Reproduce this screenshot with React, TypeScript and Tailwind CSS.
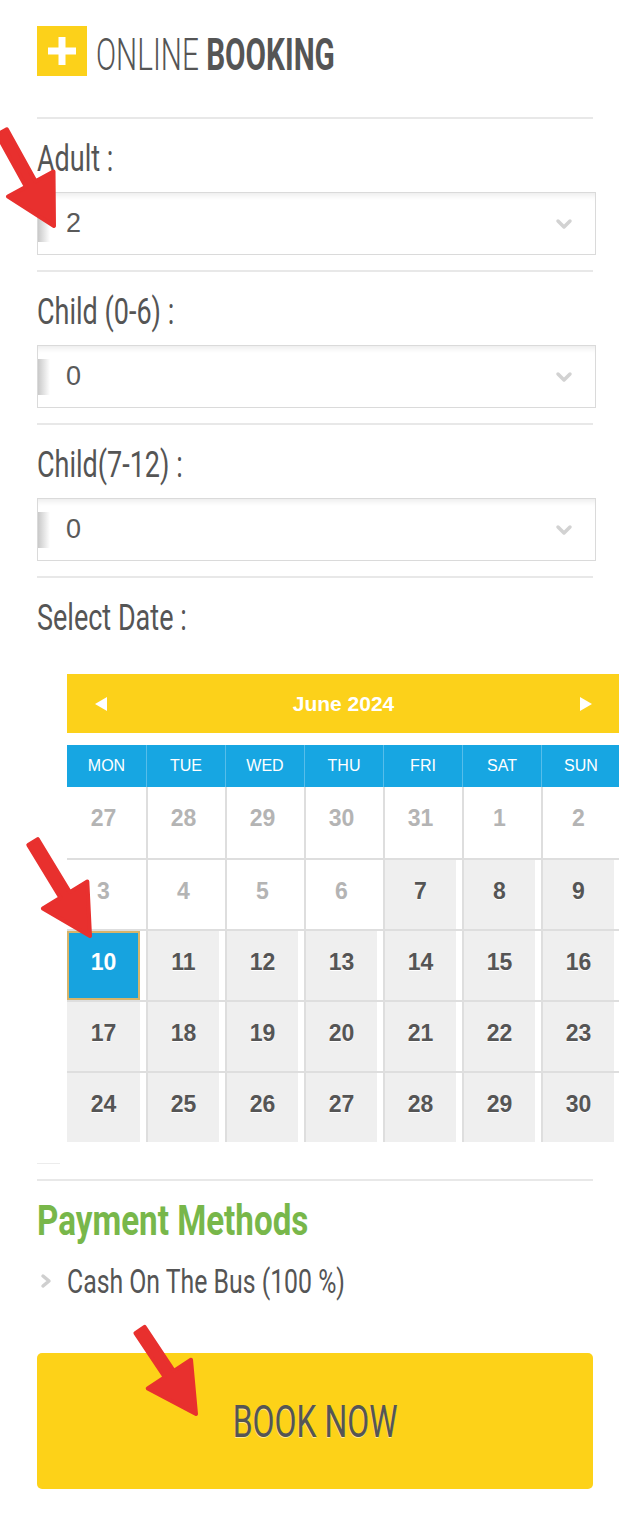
import { Fragment } from "react";

type Pt = [number, number];

// red annotation arrows drawn on top of the form
const arrowPoints = (s: Pt, t: Pt, shaft = 11, headLen = 48, headW = 26) => {
    const dx = t[0] - s[0]
    const dy = t[1] - s[1]
    const len = Math.hypot(dx, dy)
    const ux = dx / len
    const uy = dy / len
    const nx = -uy
    const ny = ux
    const bx = t[0] - ux * headLen
    const by = t[1] - uy * headLen
    const pts: Pt[] = [
        [s[0] + nx * shaft / 2, s[1] + ny * shaft / 2],
        [bx + nx * shaft / 2, by + ny * shaft / 2],
        [bx + nx * headW, by + ny * headW],
        [t[0], t[1]],
        [bx - nx * headW, by - ny * headW],
        [bx - nx * shaft / 2, by - ny * shaft / 2],
        [s[0] - nx * shaft / 2, s[1] - ny * shaft / 2],
    ]
    return pts.map(p => p.join(',')).join(' ')
}

const Chevron = () => (
    <svg width="18" height="12" viewBox="0 0 18 12" fill="none">
        <polyline points="3,3 9,9 15,3" stroke="#d2d2d2" strokeWidth="3.5" strokeLinecap="round" strokeLinejoin="round" />
    </svg>
)

const Divider = () => <div className="h-[2px] bg-[#e8e8e8] mr-[3px]" />

const Field = ({ label, value }: { label: string; value: string }) => (
    <div>
        <div className="pt-[22px] pb-[15px] h-[36px] box-content text-[36px] leading-none text-[#555]">
            <span className="inline-block origin-left scale-x-[0.75] whitespace-nowrap">{label}</span>
        </div>
        <div className="h-[63px] border border-[#dadada] bg-white shadow-[inset_0_7px_6px_-5px_rgba(0,0,0,0.09)] flex items-center pr-[22px]">
            <div className="w-[12px] h-[36px] bg-gradient-to-r from-[#c9c9c9] to-white" />
            <span className="pl-[16px] flex-1 text-[27px] text-[#5a5a5a] font-['Liberation_Sans',Arial,sans-serif]">{value}</span>
            <Chevron />
        </div>
        <div className="mt-[15px]">
            <Divider />
        </div>
    </div>
)

const weekDays = ['MON', 'TUE', 'WED', 'THU', 'FRI', 'SAT', 'SUN']

const rows = [
    [27, 28, 29, 30, 31, 1, 2],
    [3, 4, 5, 6, 7, 8, 9],
    [10, 11, 12, 13, 14, 15, 16],
    [17, 18, 19, 20, 21, 22, 23],
    [24, 25, 26, 27, 28, 29, 30],
]

const Calendar = () => (
    <div className="ml-[30px] w-[553px] font-['Liberation_Sans',Arial,sans-serif]">
        <div className="h-[59px] bg-[#fcd11a] flex items-center justify-between px-[28px]">
            <svg width="12" height="14" viewBox="0 0 12 14"><polygon points="12,0 12,14 0,7" fill="#fff" /></svg>
            <span className="text-white font-bold text-[21px]">June 2024</span>
            <svg width="12" height="14" viewBox="0 0 12 14"><polygon points="0,0 0,14 12,7" fill="#fff" /></svg>
        </div>
        <div className="mt-[12px] grid grid-cols-7 h-[42px] bg-[#17a6e2]">
            {weekDays.map((d, i) => (
                <div key={d} className={`flex items-center justify-center text-white text-[16px] ${i > 0 ? 'border-l border-[#56bdea]' : ''}`}>
                    {d}
                </div>
            ))}
        </div>
        {rows.map((row, r) => (
            <div key={r} className={`grid grid-cols-7 h-[71px] ${r > 0 ? 'border-t-2 border-[#dedede]' : ''}`}>
                {row.map((day, c) => {
                    const past = r === 0 || (r === 1 && c < 4)
                    const selected = r === 2 && c === 0
                    return (
                        <div key={c} className={`flex ${c > 0 ? 'border-l-2 border-[#dedede]' : ''}`}>
                            <div
                                className={`flex-1 mr-[6px] flex justify-center text-[23px] leading-none font-bold ${
                                    selected
                                        ? 'bg-[#17a3df] border-2 border-[#d7b46a] text-white pt-[18px]'
                                        : past
                                        ? 'bg-white text-[#b4b4b4] pt-[20px]'
                                        : 'bg-[#efefef] text-[#555] pt-[20px] [text-shadow:0_1px_0_#fff]'
                                }`}
                            >
                                {day}
                            </div>
                        </div>
                    )
                })}
            </div>
        ))}
    </div>
)

export default function App() {
    return (
        <div className="relative w-[619px] h-[1530px] overflow-hidden bg-white font-['Roboto',sans-serif]">
            <div className="pl-[37px] pr-[23px] pt-[26px]">
                <div className="flex items-center h-[50px]">
                    <div className="w-[50px] h-[50px] bg-[#fcd11a] flex items-center justify-center">
                        <svg width="28" height="28" viewBox="0 0 28 28">
                            <rect x="10.5" y="0" width="7" height="28" fill="#fff" />
                            <rect x="0" y="10.5" width="28" height="7" fill="#fff" />
                        </svg>
                    </div>
                    <div className="ml-[9px] pt-[6px] text-[45px] leading-none text-[#555]">
                        <span className="inline-block origin-left scale-x-[0.66] whitespace-nowrap">
                            <span className="font-light">ONLINE</span> <span className="font-bold">BOOKING</span>
                        </span>
                    </div>
                </div>
                <div className="mt-[41px]">
                    <Divider />
                </div>

                <Field label="Adult :" value="2" />
                <Field label="Child (0-6) :" value="0" />
                <Field label="Child(7-12) :" value="0" />

                <div className="pt-[22px] pb-[38px] h-[36px] box-content text-[36px] leading-none text-[#555]">
                    <span className="inline-block origin-left scale-x-[0.75] whitespace-nowrap">Select Date :</span>
                </div>
                <Calendar />

                <div className="mt-[21px] w-[23px] h-px bg-[#ececec]" />
                <div className="mt-[15px]">
                    <Divider />
                </div>

                <div className="pt-[19px] h-[42px] box-content text-[42px] leading-none font-bold text-[#78b74a]">
                    <span className="inline-block origin-left scale-x-[0.79] whitespace-nowrap">Payment Methods</span>
                </div>
                <div className="pt-[22px] flex items-center h-[34px] box-content text-[34px] leading-none text-[#555]">
                    <svg width="14" height="16" viewBox="0 0 14 16" className="ml-[2px] shrink-0">
                        <polyline points="4,3 10,8 4,13" fill="none" stroke="#cfcfcf" strokeWidth="3.5" strokeLinecap="round" strokeLinejoin="round" />
                    </svg>
                    <span className="ml-[14px] inline-block origin-left scale-x-[0.73] whitespace-nowrap">Cash On The Bus (100 %)</span>
                </div>

                <button className="mt-[55px] w-[556px] h-[136px] rounded-[5px] bg-[#fdd218] flex items-center justify-center text-[45px] leading-none text-[#555] [text-shadow:0_1px_0_#fff8]">
                    <span className="inline-block scale-x-[0.71] whitespace-nowrap">BOOK NOW</span>
                </button>
            </div>

            <svg className="absolute inset-0 pointer-events-none" width="619" height="1530">
                {([
                    [[2, 132], [54, 226]],
                    [[33, 842], [90, 936]],
                    [[140, 1330], [196, 1414]],
                ] as [Pt, Pt][]).map(([s, t], i) => (
                    <Fragment key={i}>
                        <polygon points={arrowPoints(s, t)} fill="#e8302e" stroke="#e8302e" strokeWidth="4" strokeLinejoin="round" />
                    </Fragment>
                ))}
            </svg>
        </div>
    )
}
